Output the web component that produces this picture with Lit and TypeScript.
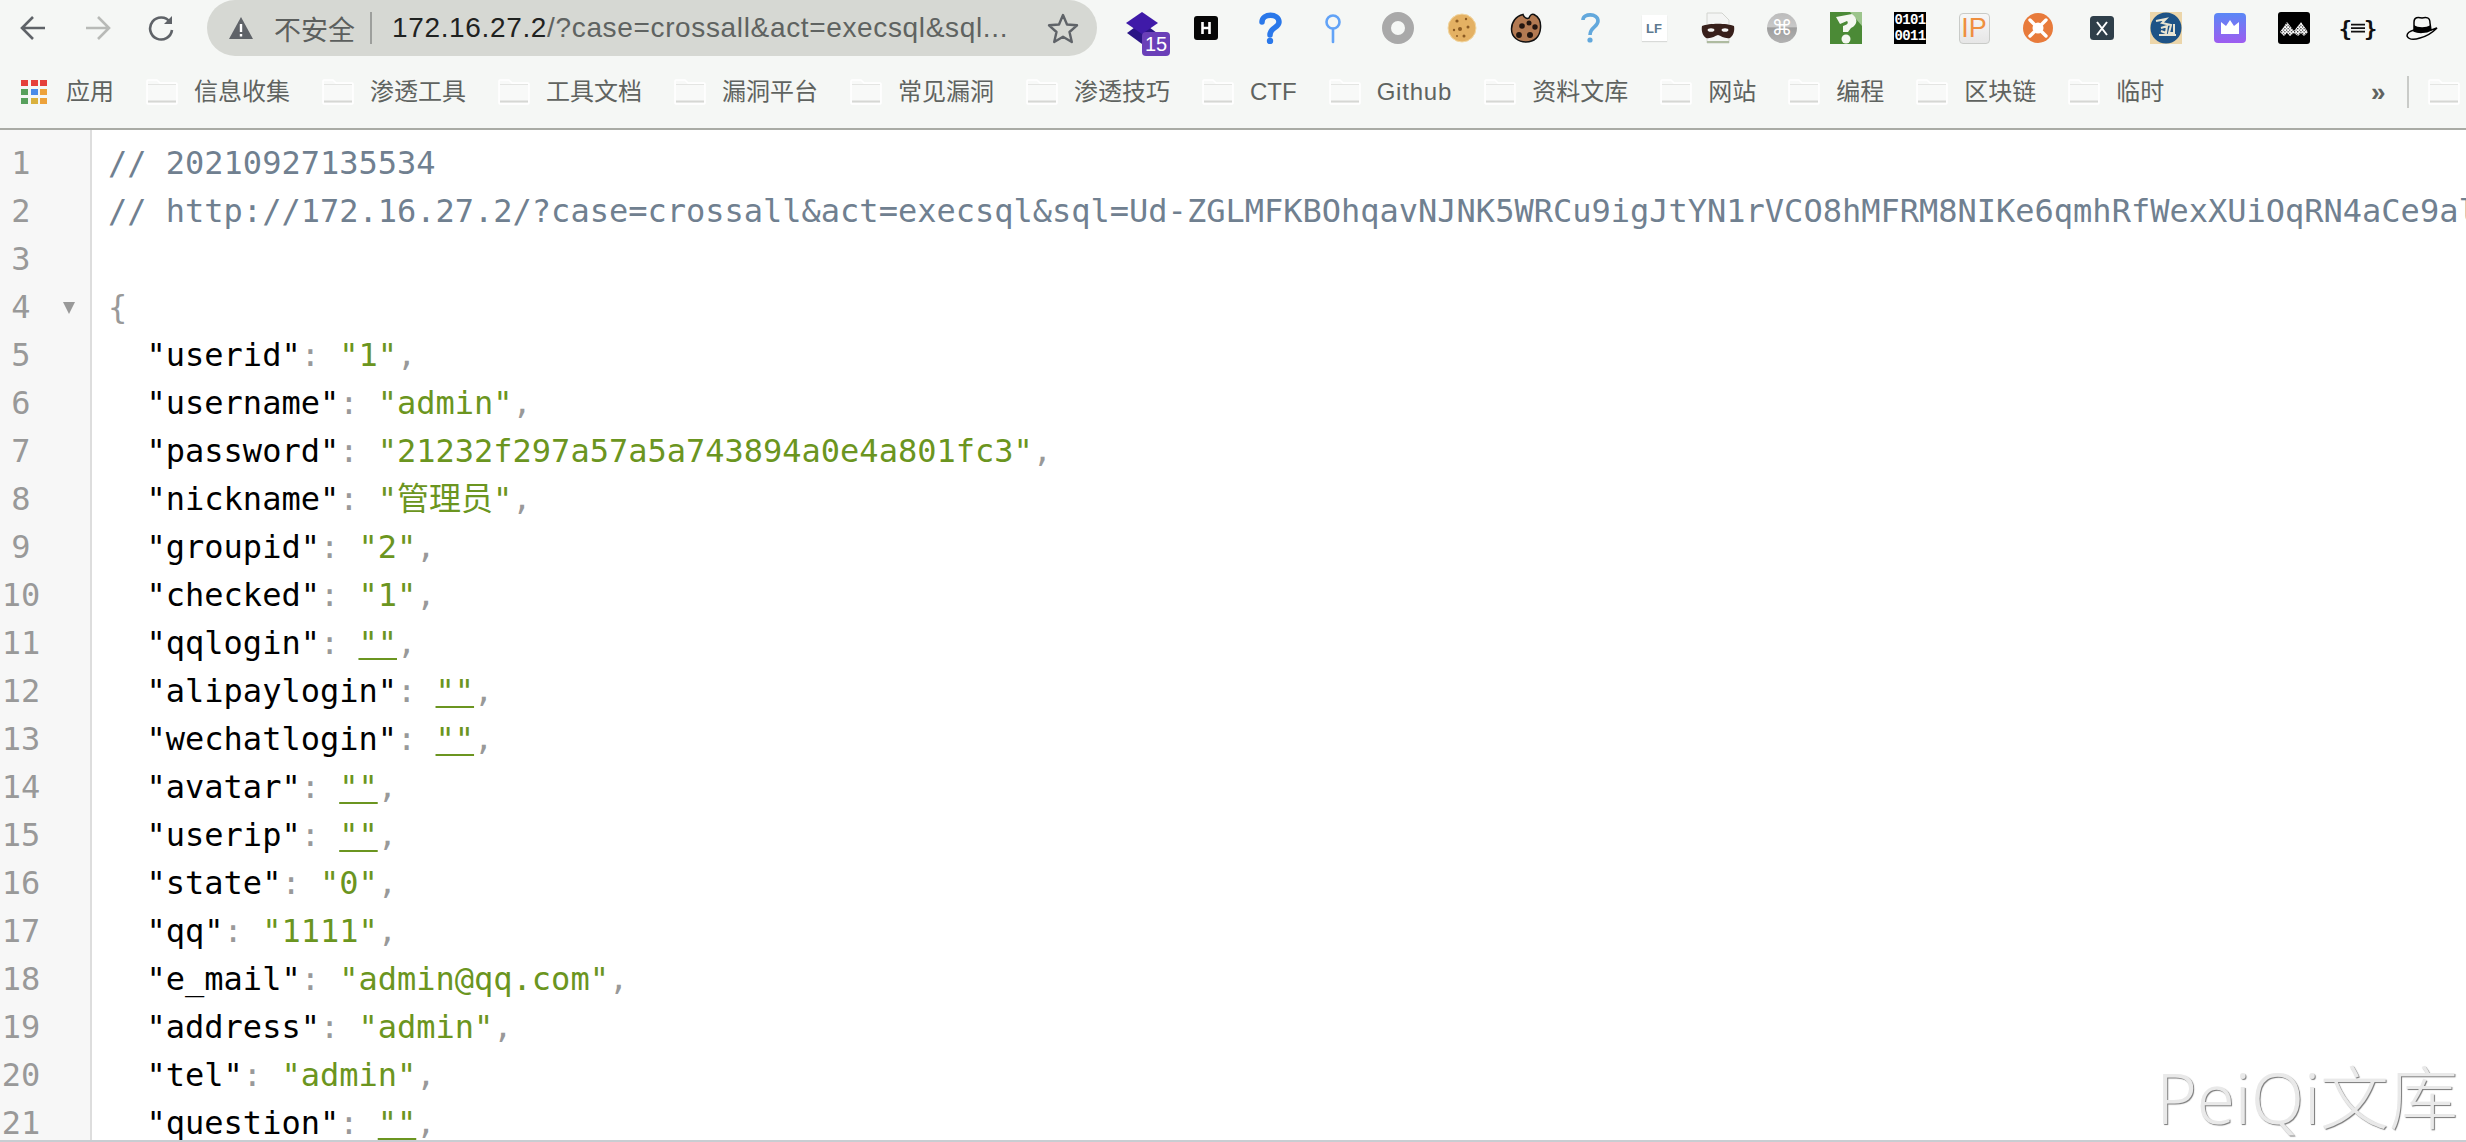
import { LitElement, html, css } from "lit";
import { customElement } from "lit/decorators.js";

const FOLDERS = ["信息收集", "渗透工具", "工具文档", "漏洞平台", "常见漏洞", "渗透技巧", "CTF", "Github", "资料文库", "网站", "编程", "区块链", "临时"];

const PAIRS: [string, string][] = [
  ["userid", "1"], ["username", "admin"], ["password", "21232f297a57a5a743894a0e4a801fc3"],
  ["nickname", "管理员"], ["groupid", "2"], ["checked", "1"], ["qqlogin", ""], ["alipaylogin", ""],
  ["wechatlogin", ""], ["avatar", ""], ["userip", ""], ["state", "0"], ["qq", "1111"],
  ["e_mail", "admin@qq.com"], ["address", "admin"], ["tel", "admin"], ["question", ""],
];

const URL_LINE = "// http://172.16.27.2/?case=crossall&act=execsql&sql=Ud-ZGLMFKBOhqavNJNK5WRCu9igJtYN1rVCO8hMFRM8NIKe6qmhRfWexXUiOqRN4aCe9al";

const folderIcon = html`<svg class="folder" viewBox="0 0 32 26" width="32" height="26">
  <path d="M1 4 V2 a1 1 0 0 1 1-1 H11 l3 3 H30 a1 1 0 0 1 1 1 V24 a1 1 0 0 1-1 1 H2 a1 1 0 0 1-1-1 Z" fill="#f8f9f8" stroke="#ffffff" stroke-width="1.5"/>
  <path d="M2 5.5 H30" stroke="#e4e5e3" stroke-width="1"/>
  <path d="M2 22.5 H30" stroke="#d6d7d4" stroke-width="2"/>
</svg>`;

const icons = [
  html`<svg viewBox="0 0 32 32" width="32" height="32"><path d="M16 10 L31 21 L16 32 L1 21 Z" fill="#2a1585"/><path d="M16 0 L32 11 L16 22 L0 11 Z" fill="#3f1aa8"/></svg><span class="badge">15</span>`,
  html`<svg viewBox="0 0 32 32" width="32" height="32"><rect x="4" y="4" width="24" height="24" rx="3" fill="#060606"/><path d="M12.5 10 V22 M19.5 10 V22 M12.5 16 H19.5" stroke="#fff" stroke-width="2.6" fill="none"/></svg>`,
  html`<svg viewBox="0 0 32 32" width="32" height="32"><path d="M8 10 C8 1 25 1 25 10 C25 16 16 15 16 23" stroke="#2a78ea" stroke-width="5.5" fill="none" stroke-linecap="round"/><circle cx="16" cy="29" r="3.2" fill="#2a78ea"/></svg>`,
  html`<svg viewBox="0 0 32 32" width="32" height="32"><circle cx="15" cy="10" r="6.5" stroke="#62a3f7" stroke-width="2.6" fill="none"/><path d="M15 17 V30" stroke="#62a3f7" stroke-width="2.6" stroke-linecap="round"/></svg>`,
  html`<svg viewBox="0 0 32 32" width="32" height="32"><circle cx="16" cy="16" r="11.5" stroke="#a9a9a9" stroke-width="9" fill="none"/></svg>`,
  html`<svg viewBox="0 0 32 32" width="32" height="32"><circle cx="16" cy="16" r="14" fill="#e4b163"/><circle cx="16" cy="16" r="14" fill="none" stroke="#f2d7a2" stroke-width="1"/><g fill="#8b5a22"><circle cx="11" cy="9" r="1.6"/><circle cx="20" cy="7" r="1.2"/><circle cx="14" cy="17" r="2"/><circle cx="22" cy="15" r="1.5"/><circle cx="8" cy="18" r="1.2"/><circle cx="18" cy="24" r="1.5"/><circle cx="11" cy="24" r="1"/></g></svg>`,
  html`<svg viewBox="0 0 32 32" width="32" height="32"><path d="M13 2.5 C14 6 17 7 19 6 C20 3 22 1.5 24 2.5 C29 5 31 10 30.5 16 C30 25 24 30 16 30 C8 30 1.5 25 1.5 17 C1.5 10 6 4 13 2.5 Z" fill="#b37a52" stroke="#111" stroke-width="1.5"/><g fill="#231610"><circle cx="19" cy="11" r="2.5"/><circle cx="12" cy="14" r="2.8"/><circle cx="25" cy="15" r="2.7"/><circle cx="9" cy="23" r="2.9"/><circle cx="20" cy="23" r="3"/></g></svg>`,
  html`<svg viewBox="0 0 32 32" width="32" height="32"><path d="M9 8 C9 1 24 1 24 9 C24 15 16 15 16 23" stroke="#62a8dc" stroke-width="3.6" fill="none"/><circle cx="16" cy="28" r="2.6" fill="#62a8dc"/></svg>`,
  html`<span class="lf">LF</span>`,
  html`<svg viewBox="0 0 34 32" width="34" height="32"><path d="M6 1 H21 L28 8 V31 H6 Z" fill="#f4f5f4" stroke="#d2d4cf" stroke-width="1"/><path d="M6 30 H28" stroke="#aebba0" stroke-width="2"/><path d="M1 14 C8 11 26 11 33 14 C34 19 32 24 29 26 C24 27 20 24 17 23 C14 24 10 27 5 26 C2 24 0 19 1 14 Z" fill="#38201b"/><ellipse cx="10" cy="18" rx="3.4" ry="1.8" fill="#f4f5f4"/><ellipse cx="24" cy="18" rx="3.4" ry="1.8" fill="#f4f5f4"/></svg>`,
  html`<span class="cmd">⌘</span>`,
  html`<svg viewBox="0 0 32 32" width="32" height="32"><rect width="32" height="32" fill="#4b8a36"/><path d="M20 0 L32 0 L32 14 Z" fill="#9cc58c"/><path d="M6 5 L22 2 C28 6 28 13 21 16 L18 20 H13 L13 14 C17 13 19 11 17 9 L10 12 Z" fill="#f4f7f1"/><circle cx="16" cy="27" r="4.5" fill="#f4f7f1"/></svg>`,
  html`<span class="bin">0101<br />0011</span>`,
  html`<span class="ip">IP</span>`,
  html`<svg viewBox="0 0 32 32" width="32" height="32"><circle cx="16" cy="16" r="15" fill="#e87b3b"/><circle cx="16" cy="16" r="5.5" fill="#fff"/><g stroke="#fff" stroke-width="3.4" stroke-linecap="round"><path d="M8 8 L12 12 M24 8 L20 12 M8 24 L12 20 M24 24 L20 20"/></g></svg>`,
  html`<svg viewBox="0 0 32 32" width="32" height="32"><rect x="4" y="4" width="24" height="24" rx="3.5" fill="#2f3f4a"/><path d="M11 10 L21 23 M21 10 L11 23" stroke="#fff" stroke-width="2"/></svg>`,
  html`<svg viewBox="0 0 32 32" width="32" height="32"><rect width="32" height="32" fill="#ecd6aa"/><circle cx="16" cy="16" r="15.5" fill="#1e5386"/><path d="M6 9 L16 7 L12 11 L21 13 L19 21 L24 21 L24 12 M11 16 L17 14 L16 21 L11 19 M9 23 H26" stroke="#e8e4d2" stroke-width="2" fill="none"/></svg>`,
  html`<svg viewBox="0 0 32 32" width="32" height="32"><defs><linearGradient id="crown" x1="0" y1="0" x2="0" y2="1"><stop offset="0" stop-color="#5a88f6"/><stop offset="1" stop-color="#9e5cf0"/></linearGradient></defs><rect y="1" width="32" height="30" rx="4" fill="url(#crown)"/><path d="M7 10 L12 14 L16 8 L20 14 L25 10 V22 H7 Z" fill="#fff"/></svg>`,
  html`<svg viewBox="0 0 32 32" width="32" height="32"><defs><pattern id="ck" width="3.2" height="3.2" patternUnits="userSpaceOnUse"><rect width="3.2" height="3.2" fill="#fff"/><rect width="1.1" height="1.1" fill="#000"/><rect x="1.6" y="1.6" width="1.1" height="1.1" fill="#000"/></pattern></defs><rect width="32" height="32" rx="3" fill="#000"/><path d="M2 20 L9 10 L16 19 L23 10 L30 20 L26 24 L23 21 L20 24 L16 21 L12 24 L9 21 L6 24 Z" fill="url(#ck)"/></svg>`,
  html`<span class="braces">{<svg viewBox="0 0 12 12" width="14" height="14"><path d="M0 3 H12 M0 6 H12 M0 9 H12" stroke="#111" stroke-width="1.5"/></svg>}</span>`,
  html`<svg viewBox="0 0 32 32" width="32" height="32"><path d="M1 24 C3 28 8 28 14 26 C22 24 27 20 31 16 C28 17 26 18 24 18 L8 18 C4 19 1 21 1 24 Z" fill="#f5f7f5" stroke="#000" stroke-width="1.5"/><path d="M8 10 C8 5 12 5 16 6 C20 5 24 5 24 11 L25 18 C20 21 12 21 8 19 Z" fill="#f5f7f5" stroke="#000" stroke-width="1.5"/><path d="M8 13 C12 16 20 16 24.5 13 L25 18 C20 21 12 21 8 19 Z" fill="#000"/></svg>`,
];

const appColors = ["r", "r", "r", "g", "b", "o", "g", "y", "o"];

@customElement("app-root")
export class AppRoot extends LitElement {
  static styles = css`
    :host { display: flex; flex-direction: column; width: 2466px; height: 1142px; overflow: hidden; position: relative; background: #fff; }
    .chrome { background: #f5f7f5; height: 130px; box-sizing: border-box; border-bottom: 2px solid #a9aba5; flex: none; font-family: "Liberation Sans", "Noto Sans CJK SC", sans-serif; }
    .top { height: 56px; display: flex; align-items: center; padding-left: 1px; }
    .nav { width: 64px; height: 56px; display: flex; align-items: center; justify-content: center; flex: none; }
    .omni { width: 890px; height: 56px; margin-left: 14px; background: #d6d8d3; border-radius: 28px; display: flex; align-items: center; flex: none; box-sizing: border-box; padding-left: 22px; position: relative; }
    .warn { margin-right: 21px; flex: none; }
    .unsafe { font-family: "Noto Sans CJK SC", sans-serif; font-size: 27px; color: #5c5f5d; white-space: nowrap; }
    .sep { width: 2px; height: 32px; background: #9d9f9c; margin: 0 20px 0 15px; flex: none; }
    .url { font-size: 28px; color: #5f6361; white-space: nowrap; letter-spacing: 0.65px; }
    .url b { font-weight: normal; color: #1f2221; }
    .star { position: absolute; right: 18px; top: 12px; }
    .exts { display: flex; margin-left: 13px; flex: none; }
    .ext { width: 64px; height: 32px; display: flex; align-items: center; justify-content: center; position: relative; flex: none; }
    .badge { position: absolute; left: 32px; top: 20px; width: 28px; height: 24px; background: #6a3fb8; border-radius: 4px; color: #fff; font-size: 20px; line-height: 24px; text-align: center; }
    .lf { width: 25px; height: 26px; background: #fff; box-shadow: 0 1px 1px #d8dad8; display: flex; align-items: center; justify-content: center; font-size: 13px; font-weight: bold; color: #5d7a90; }
    .cmd { width: 30px; height: 30px; border-radius: 50%; background: linear-gradient(#bcbcbc 0, #c8c8c8 45%, #9e9e9e 50%, #b2b2b2 100%); color: #fff; display: flex; align-items: center; justify-content: center; font: 21px "DejaVu Sans", sans-serif; }
    .bin { width: 32px; height: 32px; background: #000; color: #fff; font: bold 14px/16px "Liberation Mono", monospace; text-align: center; display: block; letter-spacing: -0.6px; }
    .ip { width: 31px; height: 31px; box-sizing: border-box; border: 1px solid #c9cbc8; border-radius: 4px; background: linear-gradient(#f7f7f7, #e6e6e6); color: #ef8f3f; font-size: 27px; line-height: 29px; text-align: center; }
    .braces { display: flex; align-items: center; gap: 2px; font: bold 22px "DejaVu Sans Mono", monospace; color: #111; }
    .braces svg { margin: 0 -3px; }
    .marks { height: 72px; box-sizing: border-box; display: flex; align-items: center; padding: 0 6px 0 21px; white-space: nowrap; font-size: 24px; line-height: 32px; color: #5f6360; overflow: hidden; }
    .apps { display: grid; grid-template-columns: repeat(3, 7px); grid-auto-rows: 6px; gap: 3px 2.5px; margin-right: 19px; flex: none; }
    .apps i { display: block; }
    .r { background: #e5403a; } .g { background: #57a05c; } .b { background: #4a8be8; } .o { background: #eda23a; } .y { background: #d9b13d; }
    .mark { display: flex; align-items: center; margin-left: 32px; flex: none; }
    .mark.app { margin-left: 0; }
    .mark.wide { letter-spacing: 0.8px; }
    .mark svg { margin-right: 16px; }
    .more { margin-left: auto; font-size: 26px; width: 14px; flex: none; font-weight: bold; }
    .vsep { width: 2px; height: 32px; background: #c9cbc8; margin: 0 19px 0 22px; flex: none; }
    .body { flex: 1; display: flex; min-height: 0; overflow: hidden; }
    .gutter { width: 92px; flex: none; box-sizing: border-box; background: #f7f7f7; border-right: 2px solid #dddddd; padding-top: 9px; font: 32px/48px "DejaVu Sans Mono", monospace; color: #999999; }
    .gl { display: flex; height: 48px; }
    .num { width: 42px; text-align: center; }
    .tri { width: 0; height: 0; margin: 19px 0 0 21px; border-left: 6px solid transparent; border-right: 6px solid transparent; border-top: 12px solid #999; }
    .code { flex: 1; min-width: 0; padding: 9px 0 0 16px; font: 32px/48px "DejaVu Sans Mono", "Noto Sans CJK SC", monospace; color: #000; overflow: hidden; }
    .ln { height: 48px; white-space: pre; }
    .cm { color: #708090; }
    .p { color: #999999; }
    .s { color: #6b9520; }
    .e { color: #6b9520; text-decoration: underline; text-decoration-thickness: 2px; text-underline-offset: 4px; }
    .bottom { height: 2px; background: #c8cdd2; flex: none; }
    .wm { position: absolute; right: 8px; bottom: 5px; font: 300 69px/80px "Noto Sans", "Noto Sans CJK SC", sans-serif; color: #e9e9e9; text-shadow: 1px 1px 1px #777; white-space: nowrap; }
  `;

  private arrow(flip: boolean, color: string) {
    const d = flip ? "M2 13 H25 M14 2 L25 13 L14 24" : "M25 13 H2 M13 2 L2 13 L13 24";
    return html`<svg viewBox="0 0 27 26" width="27" height="26"><path d=${d} fill="none" stroke=${color} stroke-width="2.6"/></svg>`;
  }

  render() {
    return html`
      <div class="chrome">
        <div class="top">
          <div class="nav">${this.arrow(false, "#5f6368")}</div>
          <div class="nav">${this.arrow(true, "#b8bab7")}</div>
          <div class="nav">
            <svg viewBox="0 0 28 28" width="28" height="28"><path d="M23 8 A11 11 0 1 0 25 16" fill="none" stroke="#5f6368" stroke-width="2.6"/><path d="M25 2 V10 H17 Z" fill="#5f6368"/></svg>
          </div>
          <div class="omni">
            <svg class="warn" viewBox="0 0 24 22" width="24" height="22"><path d="M12 0 L24 22 H0 Z" fill="#5f6368"/><path d="M12 7 V15 M12 17 V19.5" stroke="#fff" stroke-width="2.4"/></svg>
            <span class="unsafe">不安全</span>
            <span class="sep"></span>
            <span class="url"><b>172.16.27.2</b>/?case=crossall&amp;act=execsql&amp;sql...</span>
            <svg class="star" viewBox="0 0 32 32" width="32" height="32"><path d="M16 3 L20 12.5 L30 13.3 L22.5 20 L24.8 30 L16 24.7 L7.2 30 L9.5 20 L2 13.3 L12 12.5 Z" fill="none" stroke="#5f6368" stroke-width="2.4" stroke-linejoin="round"/></svg>
          </div>
          <div class="exts">${icons.map((i) => html`<div class="ext">${i}</div>`)}</div>
        </div>
        <div class="marks">
          <div class="mark app">
            <div class="apps">${appColors.map((c) => html`<i class=${c}></i>`)}</div>
            应用
          </div>
          ${FOLDERS.map((f) => html`<div class="mark ${f === "Github" ? "wide" : ""}">${folderIcon}${f}</div>`)}
          <span class="more">»</span>
          <span class="vsep"></span>
          ${folderIcon}
        </div>
      </div>
      <div class="body">
        <div class="gutter">
          ${Array.from({ length: 21 }, (_, i) => html`<div class="gl"><span class="num">${i + 1}</span>${i === 3 ? html`<span class="tri"></span>` : ""}</div>`)}
        </div>
        <div class="code">
          <div class="ln cm">// 20210927135534</div>
          <div class="ln cm">${URL_LINE}</div>
          <div class="ln"></div>
          <div class="ln p">{</div>
          ${PAIRS.map(([k, v]) => html`<div class="ln">  "${k}"<span class="p">: </span>${v === "" ? html`<span class="e">""</span>` : html`<span class="s">"${v}"</span>`}<span class="p">,</span></div>`)}
        </div>
      </div>
      <div class="bottom"></div>
      <div class="wm">PeiQi文库</div>
    `;
  }
}
